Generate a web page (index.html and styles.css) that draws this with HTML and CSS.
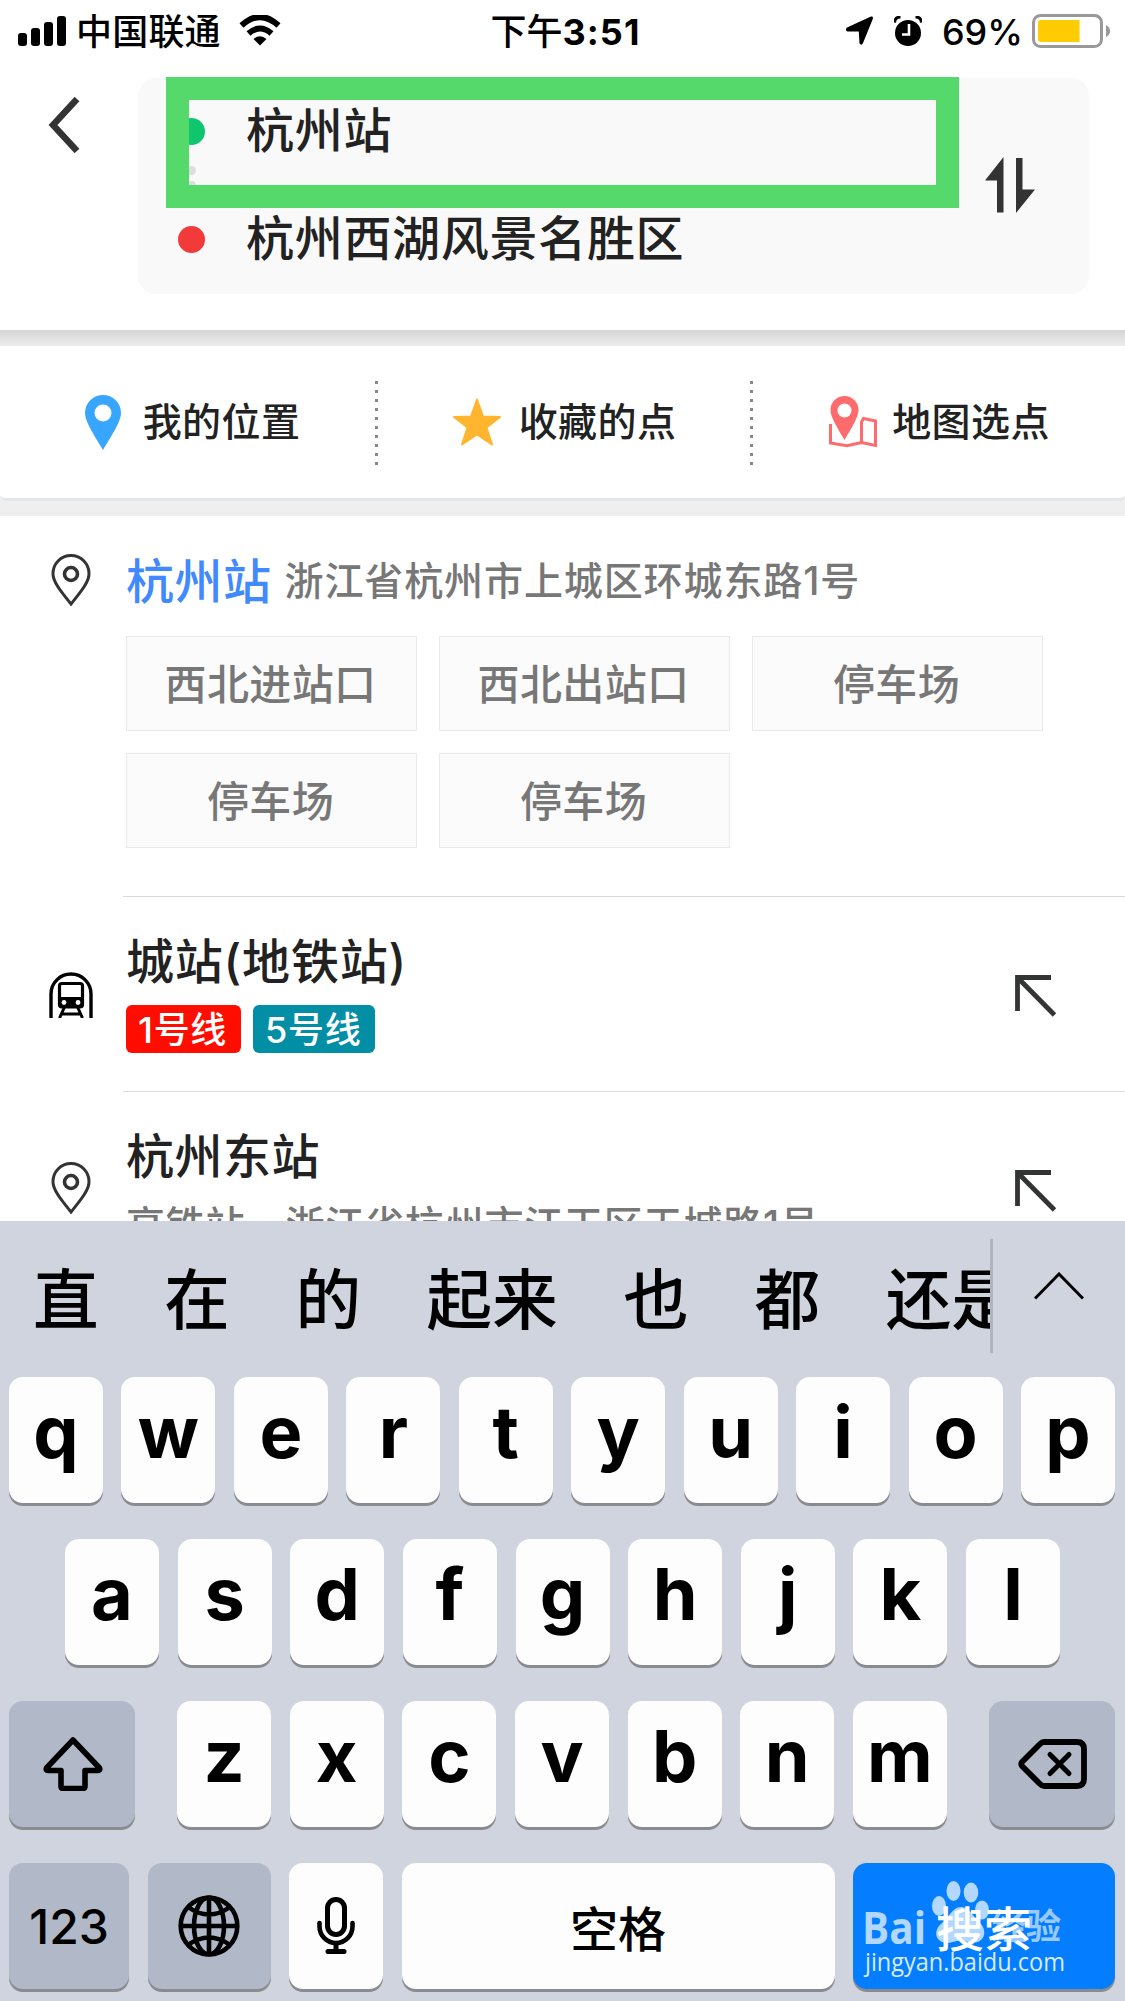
FILE: index.html
```html
<!DOCTYPE html>
<html lang="zh-CN">
<head>
<meta charset="utf-8">
<title>选择起点</title>
<link rel="stylesheet" href="styles.css">
</head>
<body>
<div class="screen">
  <header class="status">
    <div class="status-left">
      <svg width="48" height="30" viewBox="0 0 48 30"><rect x="0" y="17" width="9" height="13" rx="3"/><rect x="13" y="12" width="9" height="18" rx="3"/><rect x="26" y="6" width="9" height="24" rx="3"/><rect x="39" y="0" width="9" height="30" rx="3"/></svg>
      <span class="carrier">中国联通</span>
      <svg class="wifi" width="42" height="31" viewBox="0 0 42 31"><path d="M2.500 10.500Q21-6.500 39.500 10.500" fill="none" stroke="#000" stroke-width="6"/><path d="M9.500 18.500Q21 8.500 32.500 18.500" fill="none" stroke="#000" stroke-width="6"/><path d="M14.500 24Q21 18.500 27.500 24L21 30.500Z"/></svg>
    </div>
    <div class="time">下午<b>3:51</b></div>
    <div class="status-right">
      <svg width="27" height="29" viewBox="0 0 27 29"><path d="M25 0.500Q27.500 0 26.800 3L17 27Q15.500 30 13.500 27.500L12.800 15.500H1.500Q-1.500 14 1 11.500Z"/></svg>
      <svg class="alarm" width="28" height="30" viewBox="0 0 28 30"><circle cx="14" cy="17" r="13"/><path d="M0.500 6.500Q1 1 6.500 1M27.500 6.500Q27 1 21.500 1" fill="none" stroke="#000" stroke-width="3"/><path d="M15 8V18.500H8" fill="none" stroke="#fff" stroke-width="2.600"/></svg>
      <span class="percent">69%</span>
      <svg class="battery" width="79" height="34" viewBox="0 0 79 34"><rect x="1.500" y="1.500" width="68" height="31" rx="7" fill="none" stroke="#999" stroke-width="3"/><path d="M9 6H47.500V28H9Q6 28 6 25V9Q6 6 9 6Z" fill="#ffcc04"/><path d="M74 11Q78 13 78 17Q78 21 74 23Z" fill="#999"/></svg>
    </div>
  </header>

  <section class="route">
    <svg class="back" width="32" height="56" viewBox="0 0 32 56"><path d="M29 2L5 28L29 54" fill="none" stroke="#333" stroke-width="6.500"/></svg>
    <div class="fields">
      <div class="stops">
        <div class="stop"><i class="dot start"></i><span>杭州站</span></div>
        <div class="trail"><i></i><i></i><i></i></div>
        <div class="stop"><i class="dot end"></i><span>杭州西湖风景名胜区</span></div>
      </div>
      <svg class="swap" width="50" height="56" viewBox="0 0 50 56" fill="#333"><path d="M0 23.500L18.500 0V55.500H12V23.500Z"/><path d="M31 1H37.500V32.500H50L31 56Z"/></svg>
      <div class="highlight"></div>
    </div>
  </section>

  <nav class="quick">
    <div class="quick-item">
      <svg width="36" height="55" viewBox="0 0 36 55"><path fill="#38a6ff" fill-rule="evenodd" d="M18 0A18 18 0 0 0 0 18C0 27 11 43 18 55C25 43 36 27 36 18A18 18 0 0 0 18 0ZM18 9.500A8.500 8.500 0 1 1 18 26.500A8.500 8.500 0 1 1 18 9.500Z"/></svg>
      <span>我的位置</span>
    </div>
    <div class="quick-item">
      <svg class="star" width="48" height="48" viewBox="0 0 48 48"><path fill="#ffb62e" stroke="#ffb62e" stroke-width="2" stroke-linejoin="round" d="M24 1.500L30 18.500L47 19L33.500 29.500L39 46.500L24 36.500L9 46.500L14.500 29.500L1 19L18 18.500Z"/></svg>
      <span>收藏的点</span>
    </div>
    <div class="quick-item">
      <svg width="48" height="52" viewBox="0 0 48 52"><path fill="#ff6b6c" fill-rule="evenodd" d="M15.500 0A14 14 0 0 0 1.500 14.500C1.500 21 9 33 15.500 44C22 33 29.500 21 29.500 14.500A14 14 0 0 0 15.500 0ZM15.500 7.500A7 7 0 1 1 15.500 21.500A7 7 0 1 1 15.500 7.500Z"/><path d="M1.500 28V47L18 49.800L32.500 46.500L46.500 49.500V25L34.500 22.500L32.500 26V46.500" fill="none" stroke="#ff6b6c" stroke-width="3"/></svg>
      <span>地图选点</span>
    </div>
  </nav>

  <main class="results">
    <article class="row first">
      <svg class="pin" width="40" height="52" viewBox="0 0 40 52" fill="none" stroke="#333"><path d="M20 1.500A18 18 0 0 0 2 20C2 29 13 41 20 50C27 41 38 29 38 20A18 18 0 0 0 20 1.500Z" stroke-width="3"/><circle cx="20" cy="20" r="6.500" stroke-width="3.600"/></svg>
      <div class="body">
        <div class="line"><span class="name blue">杭州站</span><span class="addr">浙江省杭州市上城区环城东路1号</span></div>
        <div class="chips"><span>西北进站口</span><span>西北出站口</span><span>停车场</span><span>停车场</span><span>停车场</span></div>
      </div>
    </article>
    <article class="row metro">
      <svg class="train" width="44" height="46" viewBox="0 0 44 46"><path d="M2 46V22A20 20 0 0 1 42 22V46" fill="none" stroke="#000" stroke-width="3.400"/><rect x="10.500" y="11.500" width="23" height="23.500" rx="2.500" fill="none" stroke="#000" stroke-width="3.200"/><path d="M10 25H34V35H10Z"/><circle cx="15" cy="30.500" r="2.400" fill="#fff"/><circle cx="29" cy="30.500" r="2.400" fill="#fff"/><path d="M15.500 35L10.500 46M28.500 35L33.500 46M13 42H31" fill="none" stroke="#000" stroke-width="3"/></svg>
      <div class="body">
        <div class="name">城站(地铁站)</div>
        <div class="tags"><span class="tag red">1号线</span><span class="tag teal">5号线</span></div>
      </div>
      <svg class="fill" width="42" height="42" viewBox="0 0 42 42"><path d="M36 2.500H2.500V36M2.500 2.500L39.500 40" fill="none" stroke="#323534" stroke-width="4.800"/></svg>
    </article>
    <article class="row east">
      <svg class="pin" width="40" height="52" viewBox="0 0 40 52" fill="none" stroke="#333"><path d="M20 1.500A18 18 0 0 0 2 20C2 29 13 41 20 50C27 41 38 29 38 20A18 18 0 0 0 20 1.500Z" stroke-width="3"/><circle cx="20" cy="20" r="6.500" stroke-width="3.600"/></svg>
      <div class="body">
        <div class="name">杭州东站</div>
        <div class="sub"><span>高铁站</span><span>浙江省杭州市江干区天城路1号</span></div>
      </div>
      <svg class="fill" width="42" height="42" viewBox="0 0 42 42"><path d="M36 2.500H2.500V36M2.500 2.500L39.500 40" fill="none" stroke="#323534" stroke-width="4.800"/></svg>
    </article>
  </main>

  <section class="keyboard">
    <div class="candidates">
      <div class="words"><span>直</span><span>在</span><span>的</span><span>起来</span><span>也</span><span>都</span><span>还是</span></div>
      <svg class="expand" width="50" height="28" viewBox="0 0 50 28"><path d="M1 26.500L25 2L49 26.500" fill="none" stroke="#000" stroke-width="3"/></svg>
    </div>
    <div class="keys">
      <div class="keyrow"><kbd>q</kbd><kbd>w</kbd><kbd>e</kbd><kbd>r</kbd><kbd>t</kbd><kbd>y</kbd><kbd>u</kbd><kbd>i</kbd><kbd>o</kbd><kbd>p</kbd></div>
      <div class="keyrow inset"><kbd>a</kbd><kbd>s</kbd><kbd>d</kbd><kbd>f</kbd><kbd>g</kbd><kbd>h</kbd><kbd>j</kbd><kbd>k</kbd><kbd>l</kbd></div>
      <div class="keyrow">
        <kbd class="grey wide"><svg class="shift" width="60" height="54" viewBox="0 0 60 54"><path d="M30 3L56.500 31Q57.500 33.500 55 33.500H42V49Q42 51.500 40 51.500H20Q18 51.500 18 49V33.500H5Q2.500 33.500 3.500 31Z" fill="none" stroke="#000" stroke-width="5.600" stroke-linejoin="round"/></svg></kbd>
        <div class="letters"><kbd>z</kbd><kbd>x</kbd><kbd>c</kbd><kbd>v</kbd><kbd>b</kbd><kbd>n</kbd><kbd>m</kbd></div>
        <kbd class="grey wide"><svg class="del" width="70" height="50" viewBox="0 0 70 50" fill="none" stroke="#000" stroke-linejoin="round" stroke-linecap="round"><path d="M26 3H59Q66 3 66 10V40Q66 47 59 47H26Q24 47 22 45L4 27Q2.500 25 4 23L22 5Q24 3 26 3Z" stroke-width="5.800"/><path d="M32 15.500L51 34.500M51 15.500L32 34.500" stroke-width="5"/></svg></kbd>
      </div>
      <div class="keyrow bottom">
        <kbd class="grey num">123</kbd>
        <kbd class="grey globe"><svg width="62" height="62" viewBox="0 0 62 62" fill="none" stroke="#000" stroke-width="4.600"><circle cx="31" cy="31" r="28.300"/><ellipse cx="31" cy="31" rx="15" ry="28.500"/><path d="M31 2V60M2 31H60M10 12Q31 27 52 12M10 50Q31 35 52 50"/></svg></kbd>
        <kbd class="mic"><svg width="38" height="58" viewBox="0 0 38 58" fill="none" stroke="#000" stroke-linecap="round"><rect x="10.500" y="2.500" width="17" height="35" rx="8.500" stroke-width="5"/><path d="M2.500 26V29.500A16.500 16.500 0 0 0 35.500 29.500V26" stroke-width="4.600"/><path d="M19 47V54" stroke-width="5"/><path d="M11 54.500H27" stroke-width="5"/></svg></kbd>
        <kbd class="space">空格</kbd>
        <kbd class="search">
          <span class="mark">
            <span class="bai">Bai</span>
            <svg class="paw" width="60" height="64" viewBox="0 0 60 64"><ellipse cx="10" cy="26" rx="7" ry="10"/><ellipse cx="24.500" cy="11" rx="7" ry="10"/><ellipse cx="42" cy="12.500" rx="7.300" ry="10"/><ellipse cx="53" cy="30" rx="7" ry="9.500"/><path d="M32 27C41 27 43 36 51 43C59 51 55 62 46 62.500C38 63 36 60 31 60.500C25 61 22 64 15 62.500C5 60 5 49 13 43C21 37 23 27 32 27Z"/></svg>
            <span class="jy">经验</span>
            <span class="url">jingyan.baidu.com</span>
          </span>
          <span class="go">搜索</span>
        </kbd>
      </div>
    </div>
  </section>
</div>
</body>
</html>
```
FILE: styles.css
```css
* { box-sizing: border-box; }
body { margin: 0; }
svg { display: block; flex: none; }

.screen {
  width: 1125px;
  height: 2001px;
  overflow: hidden;
  display: flex;
  flex-direction: column;
  background: #fff;
  color: #222;
  font-family: Inter, "Noto Sans CJK SC", sans-serif;
  font-weight: 500;
  white-space: nowrap;
}

/* status bar */
.status {
  height: 60px;
  padding: 0 14px 0 18px;
  display: grid;
  grid-template-columns: 1fr auto 1fr;
  align-items: center;
  font-size: 36px;
  line-height: 58px;
  color: #000;
}
.status-left, .status-right { display: flex; align-items: center; }
.status-right { justify-content: flex-end; }
.carrier { margin-left: 10px; padding-top: 2px; letter-spacing: .2px; }
.wifi { margin-left: 18px; }
.time { padding: 3px 0 0 2px; }
.time b { font-weight: 700; letter-spacing: 1.1px; }
.alarm { margin-left: 21px; }
.percent { margin-left: 20px; padding-top: 2px; }
.battery { margin-left: 9px; }

/* route fields */
.route {
  height: 270px;
  padding: 18px 36px 36px 48px;
  display: flex;
  align-items: flex-start;
}
.back { margin: 19px 58px 0 0; }
.fields {
  position: relative;
  flex: 1;
  height: 216px;
  border-radius: 18px;
  background: #f9f9f9;
  display: flex;
  justify-content: space-between;
}
.stops { padding: 23px 0 0 40px; }
.stop {
  height: 60px;
  display: flex;
  align-items: center;
  gap: 41px;
  font-size: 48px;
  line-height: 62px;
  letter-spacing: .7px;
}
.dot { width: 27px; height: 27px; border-radius: 50%; }
.start { background: #0fc66f; }
.end { background: #f23a3a; }
.trail {
  width: 27px;
  height: 48px;
  padding-top: 5px;
  display: flex;
  flex-direction: column;
  align-items: center;
  gap: 6px;
}
.trail i { width: 9px; height: 9px; border-radius: 50%; background: #ddd; }
.swap { margin: 79px 54px 0 0; }
.highlight {
  position: absolute;
  left: 28px;
  top: -1px;
  width: 793px;
  height: 131px;
  border: 23px solid #55d96b;
}

/* shortcuts */
.quick {
  height: 186px;
  padding: 16px 0 15px;
  display: grid;
  grid-template-columns: repeat(3, 1fr);
  background: linear-gradient(#d6d6d6, #ebebeb 15px, #efefef 16px);
}
.quick-item {
  display: flex;
  align-items: center;
  justify-content: center;
  gap: 18px;
  background: #fff;
  border-bottom: 3px solid #e4e7ea;
  font-size: 39px;
  line-height: 60px;
  letter-spacing: .4px;
  padding-left: 4px;
}
.quick-item:first-child { border-bottom-left-radius: 6px; padding-left: 10px; gap: 22px; }
.quick-item:last-child { border-bottom-right-radius: 6px; gap: 15px; }
.quick-item + .quick-item {
  background: repeating-linear-gradient(#888 0 3px, transparent 3px 9px) 0 35px / 3px 84px no-repeat #fff;
}

/* results */
.results { height: 705px; overflow: hidden; }
.row { display: flex; }
.body { flex: 1; }
.name { font-size: 48px; line-height: 62px; height: 60px; letter-spacing: .5px; }
.blue { color: #4189ff; }
.addr, .sub { color: #777; font-size: 39px; line-height: 60px; letter-spacing: .9px; }
.pin { margin: 36px 32px 0 51px; }

.first { height: 380px; padding-top: 35px; }
.first .pin { margin-top: 3px; }
.first .body { padding-left: 3px; }
.line { height: 60px; display: flex; align-items: center; gap: 13px; }
.chips {
  width: 917px;
  margin-top: 25px;
  display: grid;
  grid-template-columns: repeat(3, 291px);
  grid-auto-rows: 95px;
  gap: 22px;
}
.chips span {
  display: flex;
  align-items: center;
  justify-content: center;
  padding: 2px 2px 0 0;
  background: #fbfbfb;
  border: 1px solid #eaeaea;
  color: #777;
  font-size: 42px;
  line-height: 60px;
  letter-spacing: .4px;
}

.metro, .east {
  padding-top: 35px;
  background: linear-gradient(#d9dbdb, #d9dbdb) 123px 0 / 1002px 1px no-repeat;
}
.metro { height: 195px; }
.metro .body { padding-left: 33px; }
.train { margin: 41px 0 0 49px; }
.metro .name { letter-spacing: .8px; }
.tags { display: flex; gap: 12px; margin-top: 14px; }
.tag {
  height: 48px;
  padding: 1px 14px 0 12px;
  border-radius: 6px;
  color: #fff;
  font-size: 36px;
  line-height: 48px;
  letter-spacing: .7px;
}
.red { background: #ff0d00; }
.teal { background: #028fa6; }
.fill { margin: 44px 68px 0 0; }

.east { height: 170px; }
.east .body { padding-left: 3px; }
.sub { display: flex; gap: 40px; margin-top: 9px; letter-spacing: .8px; }

/* keyboard */
.keyboard { flex: 1; background: #d0d4de; color: #000; }
.candidates { height: 156px; display: flex; align-items: flex-start; }
.words {
  width: 993px;
  height: 114px;
  margin-top: 18px;
  padding: 9px 0 0 33px;
  overflow: hidden;
  display: flex;
  align-items: center;
  gap: 65.600px;
  border-right: 3px solid #b0b4bc;
  font-size: 65.600px;
  line-height: 105px;
}
.words span { flex: none; }
.words span:last-child { margin-right: -40px; }
.expand { margin: 51px 0 0 41px; }
.keys { padding: 0 10px 0 9px; display: grid; gap: 36px; }
.keyrow { display: flex; justify-content: space-between; height: 126px; }
.inset { padding: 0 55px 0 56px; }
.letters { width: 770px; display: flex; justify-content: space-between; }
kbd {
  width: 94px;
  height: 126px;
  flex: none;
  display: flex;
  align-items: center;
  justify-content: center;
  padding-bottom: 17px;
  border-radius: 14px;
  background: #fdfdfd;
  box-shadow: 0 3px 0 #898b90;
  font-family: Inter, "Noto Sans CJK SC", sans-serif;
  font-size: 72px;
  font-weight: 700;
  line-height: 1;
}
.grey { background: #b1b8c7; }
.wide { width: 126px; padding-bottom: 0; }
.shift { margin-left: 2px; }
.del { margin-left: 2px; }
.bottom kbd { padding-bottom: 0; font-size: 48px; font-weight: 500; }
.bottom .num { width: 120px; padding-top: 2px; }
.bottom .globe { width: 123px; }
.bottom .space { width: 433px; padding-top: 7px; }
.bottom .search { width: 262px; padding-top: 7px; position: relative; background: #047dff; color: #fff; }
.go { position: relative; }

/* stamp over the search key */
.mark { position: absolute; inset: 0; color: #b3d8ff; }
.mark > * { position: absolute; transform-origin: 0 0; }
.bai { left: 9px; top: 41px; font: 700 45px/1 "Open Sans", sans-serif; transform: scaleX(.9); }
.paw { left: 76px; top: 17px; fill: #b3d8ff; }
.jy { left: 138px; top: 46px; font-size: 35px; font-weight: 700; opacity: .85; }
.url { left: 12px; top: 86px; font: 400 25px/1 "Open Sans", sans-serif; color: #d8eaff; transform: scaleX(.94); }
```
